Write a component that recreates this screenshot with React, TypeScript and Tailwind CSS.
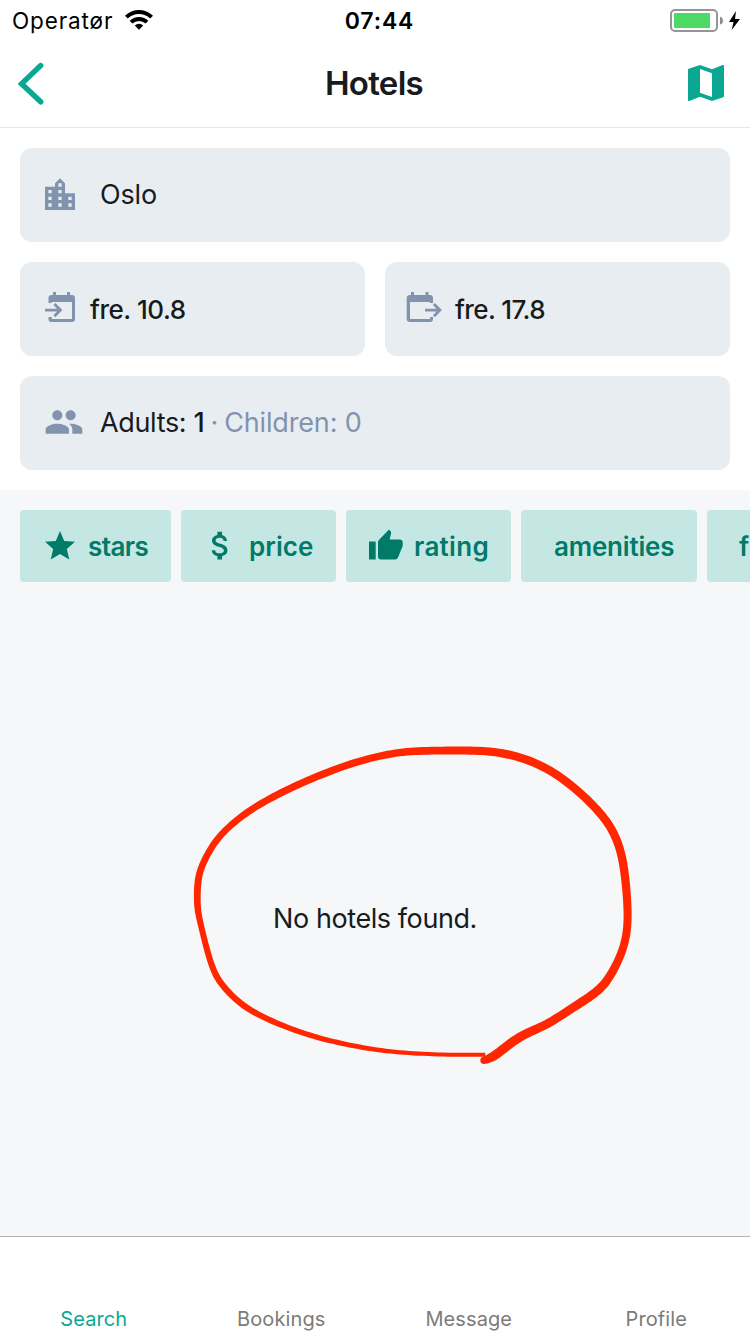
import React from 'react';

type Stop = [x: number, y: number, width: number];

const MARK: Stop[] = [
  [935, 974, 12], [820, 975, 12], [700, 971, 12], [590, 961, 14], [480, 940, 15], [390, 917, 16],
  [300, 885, 17], [195, 836, 19], [135, 777, 19], [102, 732, 19], [78, 650, 18], [59, 570, 18],
  [51, 530, 20], [52, 460, 21], [61, 413, 20], [103, 333, 20], [160, 277, 20], [230, 226, 21],
  [330, 174, 22], [430, 131, 22], [530, 94, 22], [640, 68, 22], [720, 62, 23], [850, 61, 24],
  [940, 63, 25], [1033, 83, 25], [1122, 125, 25], [1202, 188, 25], [1273, 260, 25], [1308, 319, 25],
  [1327, 380, 25], [1337, 450, 25], [1344, 540, 24], [1342, 612, 24], [1322, 681, 24], [1283, 753, 26],
  [1246, 791, 27], [1170, 838, 26], [1100, 886, 26], [1023, 915, 27], [970, 957, 28], [938, 982, 28],
  [908, 993, 22],
];

/* Outline of a smooth brush stroke whose width changes along its stops. */
function brushPath(stops: Stop[]): string {
  const pts: Stop[] = [];
  for (let i = 0; i < stops.length - 1; i++) {
    const p = [stops[Math.max(0, i - 1)], stops[i], stops[i + 1], stops[Math.min(stops.length - 1, i + 2)]];
    for (let k = 0; k < 8; k++) {
      const t = k / 8;
      const u = 1 - t;
      pts.push([0, 1, 2].map((a) =>
        (p[0][a] * u * u * u
          + p[1][a] * (3 * t * t * t - 6 * t * t + 4)
          + p[2][a] * (-3 * t * t * t + 3 * t * t + 3 * t + 1)
          + p[3][a] * t * t * t) / 6) as Stop);
    }
  }
  const left: string[] = [];
  const right: string[] = [];
  pts.forEach(([x, y, w], i) => {
    const a = pts[Math.max(0, i - 1)];
    const b = pts[Math.min(pts.length - 1, i + 1)];
    const dx = b[0] - a[0];
    const dy = b[1] - a[1];
    const n = w / 2 / Math.hypot(dx, dy);
    left.push(`${(x - dy * n).toFixed(1)} ${(y + dx * n).toFixed(1)}`);
    right.unshift(`${(x + dy * n).toFixed(1)} ${(y - dx * n).toFixed(1)}`);
  });
  return `M${left.join('L')}L${right.join('L')}Z`;
}

function StatusBar() {
  return (
    <div className="flex h-10 shrink-0 items-center text-black">
      <div className="flex flex-1 items-center pl-3">
        <span className="pt-px text-[22.5px] leading-10 tracking-[0.88px]">Operatør</span>
        <svg className="ml-[12px]" width="28" height="20" viewBox="0 0 28 20">
          <g fill="none" stroke="#000" strokeWidth="4">
            <path d="M1.400 7.200a17.800 17.800 0 0 1 25.200 0" />
            <path d="M6 12.200a11.300 11.300 0 0 1 16 0" />
          </g>
          <path d="M14 19.800l-4.200-4.300a6 6 0 0 1 8.400 0z" />
        </svg>
      </div>
      <span className="pl-[6px] pt-px text-[23px] font-[560] leading-10 tracking-[0.85px]">07:44</span>
      <div className="flex flex-1 items-center justify-end pr-[9px]">
        <svg className="mt-px" width="71" height="28" viewBox="0 0 71 28">
          <rect x="1" y="3" width="46" height="21" rx="4" fill="#fff" stroke="#959595" strokeWidth="2" />
          <rect x="4" y="6" width="36" height="15" rx="1" fill="#4cd964" />
          <path d="M50 9.800q3 1 3 3.900t-3 3.900z" fill="#8e8e8e" />
          <path d="M66 4l-7 11h4.500L61.700 23 70 12h-5z" fill="#000" />
        </svg>
      </div>
    </div>
  );
}

function Header() {
  return (
    <header className="flex h-[88px] shrink-0 items-center justify-between border-b border-[#e8e8e8] pl-[18px] pr-5">
      <svg width="48" height="44" viewBox="0 0 48 44">
        <path d="M22.700 3.500L3.500 21.800l19.200 18" fill="none" stroke="#0aa893" strokeWidth="5.400" strokeLinecap="round" />
      </svg>
      <h1 className="text-[33px] font-[560] tracking-[-0.7px] text-[#171b1e]">Hotels</h1>
      <svg className="-mt-[2px]" width="48" height="48" viewBox="0 0 24 24" fill="#0aa893">
        <path d="M20.500 3l-.16.03L15 5.100 9 3 3.360 4.900c-.21.07-.36.25-.36.48V20.500c0 .28.22.5.5.5l.16-.03L9 18.900l6 2.100 5.640-1.900c.21-.07.36-.25.36-.48V3.500c0-.28-.22-.5-.5-.5zM15 19l-6-2.110V5l6 2.110V19z" />
      </svg>
    </header>
  );
}

function SearchForm() {
  return (
    <section className="flex shrink-0 flex-col gap-5 bg-white p-5 text-[27px] text-[#171b1e]">
      <div className="flex h-[94px] items-center rounded-xl bg-[#e8edf1] pl-5">
        <svg className="-mt-px" width="40" height="40" viewBox="0 0 24 24" fill="#8293ae">
          <path d="M15 11V5l-3-3-3 3v2H3v14h18V11h-6zm-8 8H5v-2h2v2zm0-4H5v-2h2v2zm0-4H5V9h2v2zm6 8h-2v-2h2v2zm0-4h-2v-2h2v2zm0-4h-2V9h2v2zm0-4h-2V5h2v2zm6 12h-2v-2h2v2zm0-4h-2v-2h2v2z" />
        </svg>
        <span className="pl-5 tracking-[-0.15px]">Oslo</span>
      </div>
      <div className="grid grid-cols-2 gap-5 text-[26px] font-medium">
        <div className="flex h-[94px] items-center rounded-xl bg-[#e8edf1] pl-[25px]">
          <svg className="-mt-1" width="31" height="32" viewBox="0 0 31 32" fill="#8293ae">
            <path d="M8 1h3v3h11V1h3v3h2q3 0 3 3v21q0 3-3 3H6.500q-3 0-3-3v-2h3.300v2H27V11H6.800v1H3.500V7q0-3 3-3H8z" />
            <path d="M0 17.800h12l-3.600-3.800 2-2.100 7 7.200-7 7.200-2-2.100 3.600-3.700H0z" />
          </svg>
          <span className="pl-[14px] tracking-[-0.45px]">fre. 10.8</span>
        </div>
        <div className="flex h-[94px] items-center rounded-xl bg-[#e8edf1] pl-[21px]">
          <svg className="-mt-1" width="37" height="32" viewBox="0 0 37 32" fill="#8293ae">
            <path d="M5 1h3v3h11.500V1h3v3h1.500q3 0 3 3v5h-3.200v-1H4v17h20v-2h3v2q0 3-3 3H4q-3.300 0-3.300-3V7q0-3 3.300-3h1z" />
            <path d="M19 17.800h11.500l-3.600-3.800 2-2.100 7 7.200-7 7.200-2-2.100 3.600-3.700H19z" />
          </svg>
          <span className="pl-[12px] tracking-[-0.58px]">fre. 17.8</span>
        </div>
      </div>
      <div className="flex h-[94px] items-center rounded-xl bg-[#e8edf1] pl-6">
        <svg className="-mt-[2px]" width="40" height="40" viewBox="0 0 24 24" fill="#8293ae">
          <path d="M16 11c1.660 0 2.990-1.340 2.990-3S17.660 5 16 5c-1.660 0-3 1.340-3 3s1.340 3 3 3zm-8 0c1.660 0 2.990-1.340 2.990-3S9.660 5 8 5C6.340 5 5 6.340 5 8s1.340 3 3 3zm0 2c-2.330 0-7 1.170-7 3.500V19h14v-2.500c0-2.330-4.670-3.500-7-3.500zm8 0c-.29 0-.62.02-.97.05 1.160.84 1.970 1.970 1.970 3.450V19h6v-2.500c0-2.330-4.670-3.500-7-3.500z" />
        </svg>
        <span className="pl-4 tracking-[-0.34px]">Adults: <span className="font-medium">1</span></span>
        <span className="pl-[6px] text-[#8293ae]">·</span>
        <span className="pl-[6px] tracking-[-0.16px] text-[#8293ae]">Children: 0</span>
      </div>
    </section>
  );
}

function Filters() {
  return (
    <div className="flex shrink-0 gap-[10px] overflow-hidden pl-5 pt-5 text-[26px] font-[570] text-[#007a69]">
      <div className="flex h-[72px] w-[151px] shrink-0 items-center rounded bg-[#c5e7e3] pl-[22px]">
        <svg width="36" height="36" viewBox="0 0 24 24" fill="currentColor">
          <path d="M12 17.270L18.180 21l-1.640-7.030L22 9.240l-7.190-.61L12 2 9.190 8.630 2 9.240l5.460 4.730L5.820 21z" />
        </svg>
        <span className="pl-[10px] tracking-[-0.6px]">stars</span>
      </div>
      <div className="flex h-[72px] w-[155px] shrink-0 items-center rounded bg-[#c5e7e3] pl-[21px]">
        <svg className="-mt-[2px]" width="37" height="37" viewBox="0 0 24 24" fill="currentColor">
          <path d="M11.800 10.900c-2.270-.59-3-1.200-3-2.150 0-1.090 1.010-1.850 2.700-1.850 1.780 0 2.440.85 2.500 2.100h2.210c-.07-1.720-1.120-3.300-3.210-3.810V3h-3v2.160c-1.940.42-3.500 1.680-3.500 3.610 0 2.310 1.910 3.460 4.700 4.130 2.500.6 3 1.480 3 2.410 0 .69-.49 1.790-2.700 1.790-2.060 0-2.870-.92-2.980-2.100h-2.200c.12 2.190 1.760 3.420 3.680 3.830V21h3v-2.150c1.950-.37 3.500-1.500 3.500-3.550 0-2.840-2.430-3.810-4.700-4.400z" />
        </svg>
        <span className="pl-[10px] tracking-[0.05px]">price</span>
      </div>
      <div className="flex h-[72px] w-[165px] shrink-0 items-center rounded bg-[#c5e7e3] pl-[23px]">
        <svg className="-mt-1" width="34" height="32" viewBox="0 0 34 32" fill="currentColor">
          <path d="M0 13.500h6.700V31.500H0z" />
          <path d="M9 14.200q0-1.300.9-2.200L20 1.500l1.600 1.700q.8.900.5 2L20.700 11.600h10q3 0 3 3v2.700q0 .7-.2 1.300L29 29.600q-.8 1.900-2.800 1.900H12q-3 0-3-3z" />
        </svg>
        <span className="pl-[11px] tracking-[0.3px]">rating</span>
      </div>
      <div className="flex h-[72px] w-[176px] shrink-0 items-center rounded bg-[#c5e7e3] pl-[33px]">
        <span className="tracking-[-0.2px]">amenities</span>
      </div>
      <div className="flex h-[72px] w-[150px] shrink-0 items-center rounded bg-[#c5e7e3] pl-8">
        <span className="tracking-[1px]">facilities</span>
      </div>
    </div>
  );
}

const TABS = ['Search', 'Bookings', 'Message', 'Profile'];

export default function App() {
  return (
    <div className="relative flex h-[1334px] w-[750px] flex-col overflow-hidden bg-white font-['Inter',sans-serif]">
      <StatusBar />
      <Header />
      <SearchForm />
      <main className="flex min-h-0 flex-1 flex-col bg-[#f5f7f9]">
        <Filters />
        <div className="flex flex-1 items-center justify-center pt-[21px]">
          <p className="text-[27px] tracking-[-0.42px] text-[#171b1e]">No hotels found.</p>
        </div>
      </main>
      <nav className="grid h-[98px] shrink-0 grid-cols-4 items-end border-t border-[#b2b2b2] bg-white text-center text-[20px] leading-[30px] text-[#7b7b7b]">
        {TABS.map((tab, i) => (
          <span key={tab} className={i === 0 ? 'tracking-[0.1px] text-[#0aa893]' : 'tracking-[0.1px]'}>{tab}</span>
        ))}
      </nav>
      <svg className="pointer-events-none absolute left-[180px] top-[730px]" width="470" height="350" viewBox="0 0 1410 1050" fill="#ff2600">
        <path d={brushPath(MARK)} />
        <circle cx="912" cy="991" r="11" />
      </svg>
    </div>
  );
}
